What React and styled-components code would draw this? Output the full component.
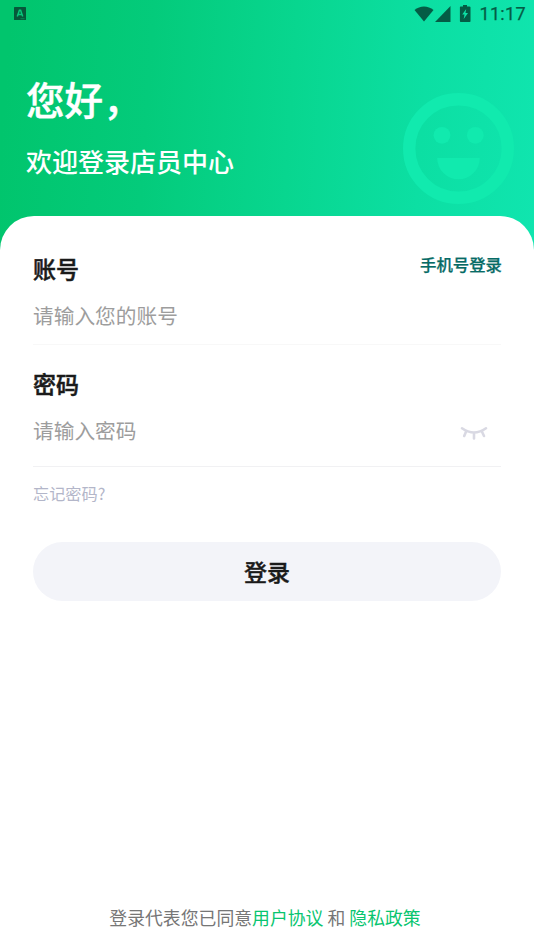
import React from "react";
import styled, { createGlobalStyle } from "styled-components";

const GlobalStyle = createGlobalStyle`
  *, *::before, *::after { box-sizing: border-box; }
  body {
    margin: 0;
    background: #fff;
    font-family: "Noto Sans CJK SC", sans-serif;
  }
  h1, h2, p { margin: 0; }
`;

const Page = styled.div`
  display: flex;
  flex-direction: column;
  height: 950px;
  overflow: hidden;
  background: linear-gradient(94deg, #01c56d 2%, #04cb7b 28%, #08d68f 54%, #0cdfa3 78%, #10e5af 100%) 0 0 / 100% 260px no-repeat;
`;

const StatusBar = styled.div`
  display: flex;
  align-items: center;
  justify-content: space-between;
  height: 27px;
  padding: 0 8px 0 14px;
  color: #045c45;
`;

const StatusIcons = styled.div`
  display: flex;
  align-items: center;
`;

const Battery = styled.svg`
  margin-top: -1px;
`;

const Clock = styled.span`
  margin-left: 7px;
  padding-top: 1px;
  font: 400 18px/26px Roboto, sans-serif;
  letter-spacing: 0.35px;
  -webkit-text-stroke: 0.25px currentColor;
`;

const Hero = styled.header`
  position: relative;
  height: 189px;
  padding: 43px 26px 0;
  color: #fff;
`;

const Greeting = styled.h1`
  font-size: 38.6px;
  font-weight: 500;
  line-height: 56px;
  -webkit-text-stroke: 0.4px currentColor;
`;

const Welcome = styled.h2`
  margin-top: 15px;
  font-size: 26px;
  font-weight: 500;
  line-height: 40px;
`;

const Smile = styled.svg`
  position: absolute;
  top: 66px;
  right: 20px;
  width: 111px;
  height: 111px;
`;

const Card = styled.main`
  display: flex;
  flex: 1;
  flex-direction: column;
  padding: 31px 33px 0;
  border-radius: 34px 34px 0 0;
  background: #fff;
`;

const Field = styled.section`
  height: ${(p) => p.$height}px;
  margin-bottom: ${(p) => p.$gap}px;
  border-bottom: 1px solid ${(p) => p.$line};
`;

const FieldRow = styled.div`
  display: flex;
  align-items: center;
  justify-content: space-between;
  height: ${(p) => p.$height}px;
`;

const Label = styled.label`
  color: #1a1a1a;
  font-size: 23px;
  font-weight: 500;
  line-height: 40px;
  -webkit-text-stroke: 0.5px currentColor;
`;

const PhoneLogin = styled.a`
  margin-top: -7px;
  margin-right: -1px;
  color: #066b66;
  font-size: 16.4px;
  font-weight: 500;
  line-height: 28px;
  -webkit-text-stroke: 0.25px currentColor;
`;

const Input = styled.input`
  flex: 1;
  min-width: 0;
  height: 40px;
  padding: 0;
  border: 0;
  outline: 0;
  background: none;
  color: #1a1a1a;
  font: 400 20.7px/40px "Noto Sans CJK SC", sans-serif;
  &::placeholder { color: #9d9d9d; opacity: 1; }
`;

const EyeIcon = styled.svg`
  width: 28px;
  height: 14px;
  margin: 5px 13px 0 0;
`;

const Forgot = styled.a`
  align-self: flex-start;
  color: #b3b6c9;
  font-size: 16.2px;
  line-height: 26px;
`;

const LoginButton = styled.button`
  height: 59px;
  margin-top: 36px;
  padding: 0;
  border: 0;
  border-radius: 30px;
  background: #f3f4f9;
  color: #1a1a1a;
  font: 500 23px/59px "Noto Sans CJK SC", sans-serif;
  -webkit-text-stroke: 0.4px currentColor;
`;

const Agreement = styled.p`
  margin: auto 0 19px;
  padding-right: 4px;
  color: #767676;
  font-size: 17.85px;
  line-height: 28px;
  text-align: center;
  white-space: nowrap;
`;

const PolicyLink = styled.a`
  color: #08c56f;
`;

export default function App() {
  return (
    <>
      <GlobalStyle />
      <Page>
        <StatusBar>
          <svg width="12" height="13" viewBox="0 0 12 13">
            <rect width="12" height="13" rx="0.5" fill="#06583a" />
            <path d="M3.3 9.500 5.400 3.300h1.200L8.700 9.500M4.200 7.400h3.600" fill="none" stroke="#08c77a" strokeWidth="1.500" />
            <path d="M6.500 11.700h4" stroke="#07935b" strokeWidth="0.800" />
          </svg>
          <StatusIcons>
            <svg width="20" height="16" viewBox="0 0 20 16" fill="currentColor">
              <path d="M.5 4C6-.8 14-.8 19.500 4L10 15.500Z" />
            </svg>
            <svg width="17" height="16" viewBox="0 0 17 16" fill="currentColor">
              <path d="M1 16 16.500 0v16Z" />
            </svg>
            <Battery width="21" height="17" viewBox="0 0 21 17">
              <path d="M12 0h4v1.500h2.200q1.300 0 1.300.8v13.900q0 .8-.8.800h-9q-.8 0-.8-.8V2.300q0-.8.8-.8H12Z" fill="currentColor" />
              <path d="m15.200 4-4 5.500h2.300L12.700 14 17 8h-2.500Z" fill="#0edfa5" />
            </Battery>
            <Clock>11:17</Clock>
          </StatusIcons>
        </StatusBar>
        <Hero>
          <Greeting>您好，</Greeting>
          <Welcome>欢迎登录店员中心</Welcome>
          <Smile viewBox="0 0 111 111" fill="#11eaae">
            <circle cx="55.500" cy="55.500" r="49.300" fill="none" stroke="#11eaae" strokeWidth="12.400" />
            <circle cx="39" cy="42.300" r="8.400" />
            <circle cx="72.300" cy="42.300" r="8.400" />
            <path d="M34.200 65h42.600a21.300 21.300 0 0 1-42.600 0Z" />
          </Smile>
        </Hero>
        <Card>
          <Field $height={98} $gap={17} $line="#f8f8f8">
            <FieldRow $height={41}>
              <Label htmlFor="account">账号</Label>
              <PhoneLogin>手机号登录</PhoneLogin>
            </FieldRow>
            <FieldRow $height={54}>
              <Input id="account" placeholder="请输入您的账号" />
            </FieldRow>
          </Field>
          <Field $height={105} $gap={13} $line="#f1f1f3">
            <FieldRow $height={41}>
              <Label htmlFor="password">密码</Label>
            </FieldRow>
            <FieldRow $height={54}>
              <Input id="password" type="password" placeholder="请输入密码" />
              <EyeIcon viewBox="0 0 28 14" fill="none" stroke="#d9d9e3" strokeWidth="2.600" strokeLinecap="round">
                <path d="M2 2.300Q14 10.700 26 2.300M6 5.800 4.200 10M14 7.500v5M22 5.800 24 10" />
              </EyeIcon>
            </FieldRow>
          </Field>
          <Forgot>忘记密码?</Forgot>
          <LoginButton type="button">登录</LoginButton>
          <Agreement>
            登录代表您已同意<PolicyLink>用户协议</PolicyLink> 和 <PolicyLink>隐私政策</PolicyLink>
          </Agreement>
        </Card>
      </Page>
    </>
  );
}
